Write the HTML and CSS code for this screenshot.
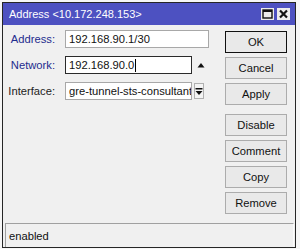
FILE: index.html
```html
<!DOCTYPE html>
<html>
<head>
<meta charset="utf-8">
<link rel="stylesheet" href="styles.css">
</head>
<body>
<div class="window">
  <div class="titlebar">
    <span class="title">Address &lt;10.172.248.153&gt;</span>
    <div class="tbtns">
      <span class="tbtn"><svg width="11" height="10" viewBox="0 0 11 10"><rect x="1" y="1" width="9" height="8" fill="none" stroke="#111" stroke-width="1.4"/><rect x="1" y="1" width="9" height="2" fill="#111"/></svg></span>
      <span class="tbtn"><svg width="11" height="10" viewBox="0 0 11 10"><path d="M2 1.5 L9 8.5 M9 1.5 L2 8.5" stroke="#111" stroke-width="2.2"/></svg></span>
    </div>
  </div>
  <div class="body">
    <div class="form">
      <div class="row">
        <span class="lbl blue">Address:</span>
        <div class="field">192.168.90.1/30</div>
      </div>
      <div class="row">
        <span class="lbl blue">Network:</span>
        <div class="field short focus">192.168.90.0<span class="caret"></span></div>
        <span class="side"><svg width="8" height="6" viewBox="0 0 8 6"><path d="M0.5 5.5 L4 1 L7.5 5.5 Z" fill="#111"/></svg></span>
      </div>
      <div class="row">
        <span class="lbl">Interface:</span>
        <div class="field short">gre-tunnel-sts-consultant</div>
        <span class="side drop"><svg width="8" height="9" viewBox="0 0 8 9"><rect x="0.5" y="1" width="7" height="1.5" fill="#111"/><path d="M0.5 4 L7.5 4 L4 8 Z" fill="#111"/></svg></span>
      </div>
    </div>
    <div class="buttons">
      <div class="btn default">OK</div>
      <div class="btn">Cancel</div>
      <div class="btn">Apply</div>
      <div class="btn group">Disable</div>
      <div class="btn">Comment</div>
      <div class="btn">Copy</div>
      <div class="btn">Remove</div>
    </div>
  </div>
  <div class="status">
    <div class="statfield">enabled</div>
  </div>
</div>
</body>
</html>
```
FILE: styles.css
```css
html, body {
  margin: 0;
  padding: 0;
}
body {
  width: 300px;
  height: 249px;
  background: #f6f6f6;
  overflow: hidden;
  padding: 2px 0 0 2px;
  box-sizing: border-box;
  font-family: "Liberation Sans", Arial, sans-serif;
  font-size: 11.2px;
  color: #111;
}
.window {
  width: 294px;
  height: 246px;
  box-sizing: border-box;
  border: 1px solid #262626;
  background: #f0f0f0;
  display: flex;
  flex-direction: column;
}
.titlebar {
  height: 22px;
  background: #4d51c1;
  display: flex;
  align-items: center;
  justify-content: space-between;
  padding: 0 5px 0 6px;
  flex: none;
}
.title {
  color: #fff;
  font-size: 11px;
  padding-bottom: 1px;
}
.tbtns {
  display: flex;
  gap: 3px;
  padding-bottom: 1px;
}
.tbtn {
  width: 13px;
  height: 12px;
  background: #ececec;
  display: flex;
  align-items: center;
  justify-content: center;
}
.tbtn svg { display: block; }
.body {
  flex: 1;
  display: flex;
  padding: 5px 8px 0 0;
}
.form {
  flex: 1;
  display: flex;
  flex-direction: column;
  gap: 8px;
}
.row {
  display: flex;
  align-items: center;
  height: 18px;
}
.lbl {
  width: 52px;
  text-align: right;
  margin-right: 10px;
  color: #222;
}
.lbl.blue { color: #1e2c8e; }
.field {
  width: 144px;
  height: 18px;
  box-sizing: border-box;
  background: #fff;
  border: 1px solid #a8a8a8;
  padding-left: 3px;
  line-height: 16px;
  white-space: nowrap;
  overflow: hidden;
  display: flex;
  align-items: center;
}
.field.short { width: 127px; }
.field.focus { border-color: #2b2b2b; }
.caret {
  display: inline-block;
  width: 1px;
  height: 13px;
  background: #000;
  margin-left: 1px;
}
.side {
  width: 17px;
  height: 18px;
  display: flex;
  align-items: center;
  justify-content: center;
}
.side svg { display: block; }
.side.drop {
  width: 10px;
  height: 16px;
  margin-left: 2px;
  box-sizing: border-box;
  border: 1px solid #b0b0b0;
  background: #f4f4f4;
}
.buttons {
  width: 62px;
  display: flex;
  flex-direction: column;
  gap: 4px;
  padding-top: 1px;
}
.btn {
  height: 22px;
  box-sizing: border-box;
  border: 1px solid #acacac;
  background: #e9e9e9;
  display: flex;
  align-items: center;
  justify-content: center;
}
.btn.default { border-color: #111; }
.btn.group { margin-top: 5px; }
.status {
  flex: none;
  height: 24px;
  padding-left: 2px;
  padding-right: 1px;
  display: flex;
}
.statfield {
  flex: 1;
  border-top: 1px solid #a0a0a0;
  border-left: 1px solid #a0a0a0;
  border-right: 1px solid #fbfbfb;
  padding-left: 3px;
  display: flex;
  align-items: center;
}
```
